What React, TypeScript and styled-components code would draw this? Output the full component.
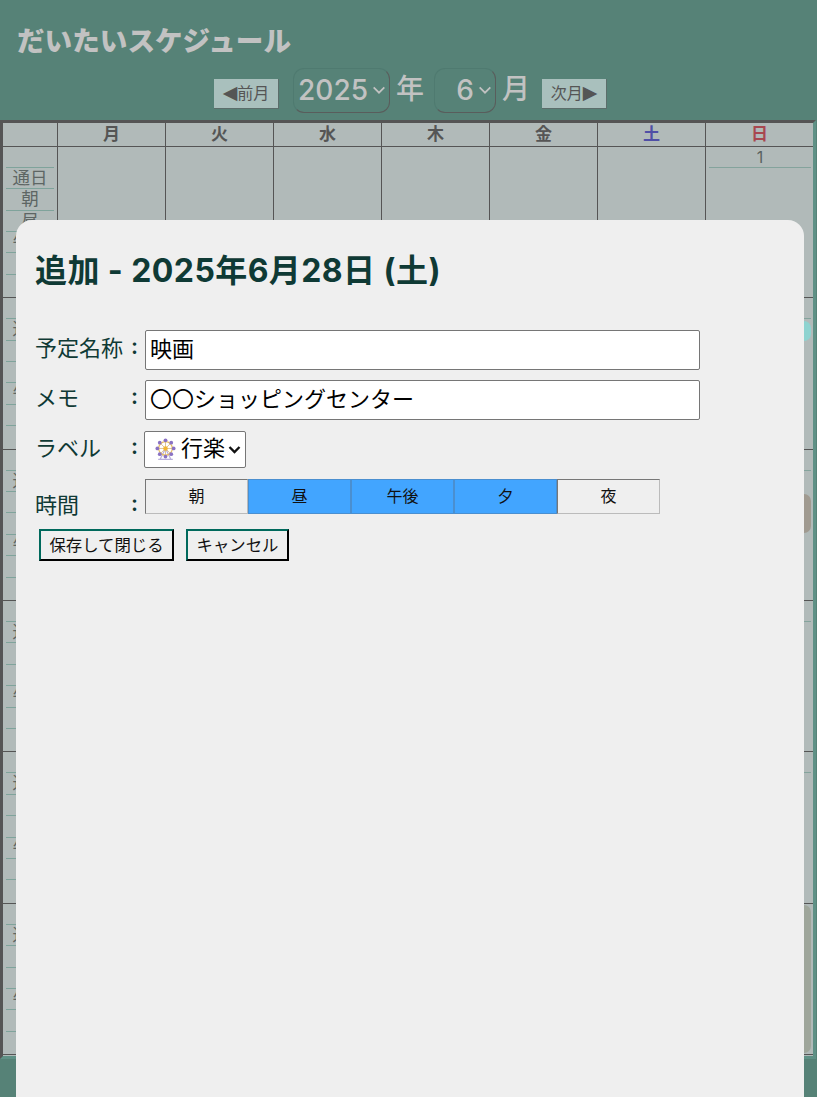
import React from "react";
import styled, { createGlobalStyle } from "styled-components";

const GlobalStyle = createGlobalStyle`
  html, body {
    margin: 0;
    height: 100%;
    overflow: hidden;
    background: #568277;
  }
  * {
    box-sizing: border-box;
  }
  body {
    font-family: "Inter", "Noto Sans CJK JP", sans-serif;
  }
`;

const Page = styled.div`
  height: 1097px;
  overflow: hidden;
  background: #568277;
`;

const Title = styled.h1`
  margin: 0;
  padding: 24px 0 0 17px;
  height: 68px;
  font-size: 27.6px;
  line-height: 34px;
  font-weight: 800;
  color: #c2c2c2;
`;

const MonthNav = styled.div`
  display: flex;
  justify-content: center;
  align-items: center;
  height: 52px;
  padding-left: 4px;
  margin-top: -1px;
  margin-bottom: 1px;
`;

const NavButton = styled.div`
  width: 65px;
  height: 30px;
  margin-top: 2px;
  padding-bottom: 3px;
  display: flex;
  align-items: center;
  justify-content: center;
  font-size: 16px;
  color: #555;
  background: #a9c0bd;
  border-right: 1px solid #5c6e6b;
  border-bottom: 1px solid #5c6e6b;
`;

const Arrow = styled.span`
  font-family: "DejaVu Sans", sans-serif;
  font-size: 19px;
  line-height: 20px;
`;

const SelectBox = styled.div<{ $width: number; $first?: boolean }>`
  width: ${(p) => p.$width}px;
  height: 45px;
  margin-left: ${(p) => (p.$first ? 14 : 0)}px;
  margin-bottom: 6px;
  display: flex;
  align-items: center;
  justify-content: flex-end;
  gap: 3px;
  padding-right: 2px;
  font-size: 28px;
  font-weight: 500;
  color: #c2c2c2;
  border: 1px solid #4f7a70;
  border-right-color: #595d5c;
  border-bottom-color: #595d5c;
  border-radius: 11px;
`;

const Unit = styled.span<{ $left: number; $right: number }>`
  margin: 0 ${(p) => p.$right}px 0 ${(p) => p.$left}px;
  padding-bottom: 12px;
  font-size: 28px;
  font-weight: 500;
  color: #c2c2c2;
`;

const Calendar = styled.div`
  width: 816px;
  height: 939px;
  border: 3px solid #555;
  border-right-color: #5f9186;
  border-bottom-color: #5f9186;
  background: #b1bab9;
  color: #555;
  overflow: hidden;
`;

const HeadRow = styled.div`
  display: grid;
  grid-template-columns: 55px repeat(6, 108px) 107px;
  height: 23.8px;
  border-bottom: 1px solid #555;
`;

const HeadCell = styled.div<{ $color?: string }>`
  display: flex;
  align-items: center;
  justify-content: center;
  height: 23px;
  padding-bottom: 4px;
  font-size: 17px;
  font-weight: 700;
  color: ${(p) => p.$color || "#555"};
  border-right: 1px solid #555;
  &:last-child {
    border-right: none;
  }
`;

const Week = styled.div`
  display: grid;
  grid-template-columns: 55px repeat(6, 108px) 107px;
  height: 151.4px;
  border-bottom: 1px solid #555;
`;

const SideCell = styled.div`
  padding: 0 3px;
  border-right: 1px solid #555;
  overflow: hidden;
`;

const SideBlank = styled.div`
  height: 20px;
`;

const SideRow = styled.div`
  height: 21.4px;
  border-top: 1px solid #7fa39b;
  font-size: 17.5px;
  line-height: 20px;
  text-align: center;
  color: #5e6664;
`;

const DayCell = styled.div`
  border-right: 1px solid #555;
  overflow: hidden;
  &:last-child {
    border-right: none;
  }
`;

const DayNumber = styled.div`
  height: 21px;
  margin: 0 2px 0 3px;
  border-bottom: 1px solid #84a39c;
  font-size: 16px;
  line-height: 20px;
  text-align: center;
  color: #5a6260;
`;

const EventBar = styled.div<{ $top: number; $height: number; $color: string }>`
  height: ${(p) => p.$height}px;
  margin: ${(p) => p.$top}px 2px 0 3px;
  border-radius: 7px;
  background: ${(p) => p.$color};
`;

const Modal = styled.div`
  position: fixed;
  top: 220px;
  left: 16px;
  width: 788px;
  bottom: -30px;
  padding: 26px 20px 24px 19px;
  border-radius: 16px;
  background: #efefef;
  color: #0f3a35;
`;

const ModalTitle = styled.h2`
  margin: 0 0 34px;
  font-size: 32px;
  line-height: 50px;
  font-weight: 700;
  letter-spacing: 0.42px;
`;

const FormRow = styled.div<{ $height: number; $gap: number }>`
  display: flex;
  align-items: center;
  height: ${(p) => p.$height}px;
  margin-bottom: ${(p) => p.$gap}px;
`;

const FieldLabel = styled.label<{ $low?: boolean }>`
  width: 93px;
  padding: ${(p) => (p.$low ? "13px 0 0" : "0 0 8px")};
  font-size: 22px;
  white-space: nowrap;
`;

const Colon = styled.span<{ $low?: boolean }>`
  width: 17px;
  padding: ${(p) => (p.$low ? "13px 0 0 3px" : "0 0 8px 3px")};
  font-size: 22px;
  font-weight: 600;
`;

const TextInput = styled.input`
  width: 555px;
  height: 40px;
  padding: 0 4px 7px;
  font-family: inherit;
  font-size: 22px;
  color: #000;
  background: #fff;
  border: 1px solid #767676;
  border-radius: 2px;
  outline: none;
`;

const LabelSelect = styled.div`
  width: 102px;
  height: 37px;
  margin-left: -1px;
  padding: 0 0 7px 10px;
  display: flex;
  align-items: center;
  gap: 5px;
  font-size: 22px;
  color: #000;
  background: #fff;
  border: 1px solid #767676;
  border-radius: 2px;
  svg:last-child {
    margin: 6px 0 0 -3px;
  }
  svg:first-child {
    margin-top: 7px;
  }
`;

const Segments = styled.div`
  display: flex;
`;

const Segment = styled.div<{ $on?: boolean }>`
  width: 103px;
  height: 35px;
  padding-bottom: 4px;
  display: flex;
  align-items: center;
  justify-content: center;
  font-size: 16px;
  color: #111;
  background: ${(p) => (p.$on ? "#42a5ff" : "#efefef")};
  border: 1px solid ${(p) => (p.$on ? "#4a8fd0" : "#bbb")};
  border-top-color: ${(p) => (p.$on ? "#4a8fd0" : "#777")};
  border-left-color: ${(p) => (p.$on ? "#4a8fd0" : "#777")};
`;

const Actions = styled.div`
  display: flex;
  gap: 12px;
  padding-left: 4px;
`;

const ActionButton = styled.button<{ $width: number }>`
  width: ${(p) => p.$width}px;
  height: 32px;
  padding: 0 0 2px;
  font-family: inherit;
  font-size: 16.4px;
  color: #111;
  background: #efefef;
  border: 2px solid #000;
  border-top-color: #00695c;
  border-left-color: #00695c;
`;

const Chevron = ({ size, color, weight }: { size: number; color: string; weight: number }) => (
  <svg width={size} height={size} viewBox="0 0 12 12" fill="none">
    <path d="M2 4l4 4 4-4" stroke={color} strokeWidth={weight} />
  </svg>
);

const FerrisWheel = () => (
  <svg width="21" height="23" viewBox="0 0 20 22">
    <path d="M5 20L10 10l5 10M3 20.5h14" stroke="#b9b0dc" strokeWidth="1.2" fill="none" />
    <circle cx="10" cy="10" r="6.5" stroke="#e6bd62" strokeWidth="1.2" fill="none" />
    <path
      d="M10 2v16M2 10h16M4.3 4.3l11.4 11.4M15.7 4.3L4.3 15.7"
      stroke="#d9bb80"
      strokeWidth="0.8"
    />
    <circle cx="10" cy="10" r="2.2" fill="#f2b632" />
    {[
      [10, 2.2],
      [15.5, 4.5],
      [17.8, 10],
      [15.5, 15.5],
      [10, 17.8],
      [4.5, 15.5],
      [2.2, 10],
      [4.5, 4.5],
    ].map(([cx, cy]) => (
      <circle key={`${cx}-${cy}`} cx={cx} cy={cy} r="1.8" fill="#8a72c4" />
    ))}
  </svg>
);

const weekdays = [
  { label: "" },
  { label: "月" },
  { label: "火" },
  { label: "水" },
  { label: "木" },
  { label: "金" },
  { label: "土", color: "#4f4fa6" },
  { label: "日", color: "#a8474f" },
];

const slots = ["通日", "朝", "昼", "午後", "夕", "夜"];
const sundays = ["1", "8", "15", "22", "29", ""];
const times = [
  { label: "朝", on: false },
  { label: "昼", on: true },
  { label: "午後", on: true },
  { label: "夕", on: true },
  { label: "夜", on: false },
];

const sundayBars: Record<number, { top: number; height: number; color: string }> = {
  1: { top: 2, height: 20, color: "#8ed3d0" },
  2: { top: 23, height: 39, color: "#a09a90" },
  5: { top: 1, height: 148, color: "#9fa69b" },
};

export default function App() {
  return (
    <Page>
      <GlobalStyle />
      <Title>だいたいスケジュール</Title>
      <MonthNav>
        <NavButton>
          <Arrow>◀</Arrow>前月
        </NavButton>
        <SelectBox $width={97} $first>
          2025
          <Chevron size={16} color="#c2c2c2" weight={1.3} />
        </SelectBox>
        <Unit $left={6} $right={10}>
          年
        </Unit>
        <SelectBox $width={62}>
          6
          <Chevron size={16} color="#c2c2c2" weight={1.3} />
        </SelectBox>
        <Unit $left={6} $right={12}>
          月
        </Unit>
        <NavButton>
          次月<Arrow>▶</Arrow>
        </NavButton>
      </MonthNav>
      <Calendar>
        <HeadRow>
          {weekdays.map((d) => (
            <HeadCell key={d.label} $color={d.color}>
              {d.label}
            </HeadCell>
          ))}
        </HeadRow>
        {sundays.map((sunday, w) => {
          const bar = sundayBars[w];
          return (
            <Week key={w}>
              <SideCell>
                <SideBlank />
                {slots.map((s) => (
                  <SideRow key={s}>{s}</SideRow>
                ))}
              </SideCell>
              {[0, 1, 2, 3, 4, 5].map((d) => (
                <DayCell key={d} />
              ))}
              <DayCell>
                {sunday && <DayNumber>{sunday}</DayNumber>}
                {bar && <EventBar $top={bar.top} $height={bar.height} $color={bar.color} />}
              </DayCell>
            </Week>
          );
        })}
      </Calendar>
      <Modal>
        <ModalTitle>追加 - 2025年6月28日 (土)</ModalTitle>
        <FormRow $height={40} $gap={10}>
          <FieldLabel>予定名称</FieldLabel>
          <Colon>:</Colon>
          <TextInput defaultValue="映画" />
        </FormRow>
        <FormRow $height={40} $gap={11}>
          <FieldLabel>メモ</FieldLabel>
          <Colon>:</Colon>
          <TextInput defaultValue="〇〇ショッピングセンター" />
        </FormRow>
        <FormRow $height={37} $gap={11}>
          <FieldLabel>ラベル</FieldLabel>
          <Colon>:</Colon>
          <LabelSelect>
            <FerrisWheel />
            行楽
            <Chevron size={15} color="#111" weight={1.9} />
          </LabelSelect>
        </FormRow>
        <FormRow $height={35} $gap={15}>
          <FieldLabel $low>時間</FieldLabel>
          <Colon $low>:</Colon>
          <Segments>
            {times.map((t) => (
              <Segment key={t.label} $on={t.on}>
                {t.label}
              </Segment>
            ))}
          </Segments>
        </FormRow>
        <Actions>
          <ActionButton $width={135}>保存して閉じる</ActionButton>
          <ActionButton $width={103}>キャンセル</ActionButton>
        </Actions>
      </Modal>
    </Page>
  );
}
